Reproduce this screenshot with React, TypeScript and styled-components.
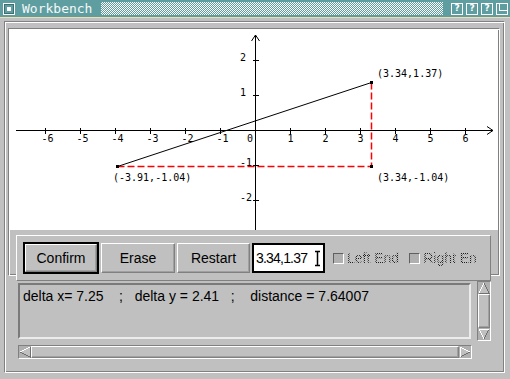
import React from 'react'
import styled, { createGlobalStyle } from 'styled-components'

const GlobalStyle = createGlobalStyle`
  *, *::before, *::after { box-sizing: border-box; }
  html, body { margin: 0; padding: 0; background: #c0c0c0; }
  body {
    width: 510px;
    height: 379px;
    overflow: hidden;
    font-family: "Liberation Sans", Arial, sans-serif;
  }
`

const Window = styled.div`
  width: 510px;
  height: 379px;
  background: #c0c0c0;
  display: flex;
  flex-direction: column;
`

const TitleBar = styled.div`
  height: 18px;
  background: #5f9ea0;
  border-bottom: 1px solid #f3dcb0;
  display: flex;
  align-items: center;
  padding: 0 2px 0 3px;
`

const Title = styled.span`
  font-family: "DejaVu Sans Mono", monospace;
  font-size: 13px;
  color: #f4f8f8;
  margin-left: 7px;
  line-height: 17px;
`

const Hatch = styled.div`
  flex: 1;
  height: 13px;
  margin: 0 8px 0 9px;
  background: repeating-conic-gradient(#ffffff 0% 25%, #5f9ea0 0% 50%) 0 0 / 2px 2px;
`

const TitleButtons = styled.div`
  display: flex;
  gap: 3px;
`

const HelpBox = styled.span`
  width: 12px;
  height: 12px;
  border: 1px solid #ffffff;
  display: flex;
  align-items: center;
  justify-content: center;
  font-family: "DejaVu Sans", sans-serif;
  font-weight: bold;
  font-size: 9px;
  line-height: 1;
  color: #ffffff;
`

const Frame = styled.div`
  margin: 3px 5px 0 4px;
  border: 1px solid;
  border-color: #808080 #ffffff #ffffff #808080;
  box-shadow: inset 1px 1px 0 #ffffff, inset -1px -1px 0 #808080;
  padding: 6px 4px 13px 3px;
`

const Well = styled.div`
  width: 492px;
  border: 1px solid;
  border-color: #808080 #ffffff #ffffff #808080;
  box-shadow: inset 1px 1px 0 #ffffff, inset -1px -1px 0 #808080;
  padding: 1px;
`

const Canvas = styled.div`
  width: 488px;
  height: 200px;
  background: #ffffff;
  overflow: hidden;

  svg { display: block; }
  text {
    font-family: "DejaVu Sans Mono", "Liberation Mono", monospace;
    font-size: 10px;
    fill: #000;
  }
`

const ButtonPanel = styled.div`
  height: 46px;
  margin: 5px 7px -7px 6px;
  border: 1px solid;
  border-color: #ffffff #808080 #808080 #ffffff;
  padding: 0 6px;
  display: flex;
  align-items: center;
  gap: 2px;
  background: #c0c0c0;
`

const DefaultRing = styled.div`
  border: 2px solid #000;
  display: flex;
`

const Button = styled.div<{ $w: number; $h: number }>`
  width: ${p => p.$w}px;
  height: ${p => p.$h}px;
  display: flex;
  align-items: center;
  justify-content: center;
  border: 1px solid;
  border-color: #ffffff #808080 #808080 #ffffff;
  box-shadow: inset -1px -1px 0 #a0a0a0;
  font-size: 14px;
  color: #000;
  background: #c0c0c0;
`

const EntryBox = styled.div`
  position: relative;
  width: 73px;
  height: 30px;
  border: 2px solid #000;
  background: #ffffff;
  display: flex;
  align-items: center;
  padding-left: 2px;
  overflow: hidden;
  font-size: 14px;
  letter-spacing: -0.8px;
  color: #000;
  white-space: nowrap;
`

const IBeam = styled.svg`
  position: absolute;
  right: 2px;
  top: 5px;
`

const Check = styled.div<{ $ml: number }>`
  display: flex;
  align-items: center;
  margin-left: ${p => p.$ml}px;
  gap: 3px;
`

const Indicator = styled.span`
  width: 11px;
  height: 11px;
  border: 1px solid;
  border-color: #606060 #ffffff #ffffff #606060;
  background: #b0b0b0;
`

const Stippled = styled.span`
  font-size: 14px;
  color: #1e1e1e;
  white-space: nowrap;
  -webkit-mask-image: repeating-conic-gradient(#000 0% 25%, transparent 0% 50%);
  -webkit-mask-size: 2px 2px;
  mask-image: repeating-conic-gradient(#000 0% 25%, transparent 0% 50%);
  mask-size: 2px 2px;
`

const TextRow = styled.div`
  display: flex;
  align-items: center;
  margin: 5px 0 0 10px;
  gap: 6px;
`

const TextArea = styled.div`
  width: 453px;
  height: 56px;
  border: 2px solid;
  border-color: #7a7a7a #ececec #ececec #7a7a7a;
  padding: 3px 3px;
  font-size: 14px;
  line-height: 16px;
  color: #000;
  white-space: pre;
  overflow: hidden;
`

const Scrollbar = styled.div<{ $vertical?: boolean }>`
  display: flex;
  flex-direction: ${p => (p.$vertical ? 'column' : 'row')};
  width: ${p => (p.$vertical ? '14px' : '454px')};
  height: ${p => (p.$vertical ? '60px' : '14px')};
  border: 1px solid;
  border-color: #808080 #ffffff #ffffff #808080;
  background: #b0b0b0;
`

const HScrollWrap = styled.div`
  margin: 4px 0 0 10px;
`

const Slider = styled.div`
  flex: 1;
  border: 1px solid;
  border-color: #ffffff #808080 #808080 #ffffff;
  box-shadow: inset -1px -1px 0 #a0a0a0;
  background: #c0c0c0;
`

type Dir = 'up' | 'down' | 'left' | 'right'

const ArrowBox = styled.svg`
  display: block;
  flex: none;
`

const Arrow = ({ dir }: { dir: Dir }) => {
  const shapes: Record<Dir, { poly: string; lit: string; dark: string }> = {
    up: { poly: '6,1 11,11 1,11', lit: '1,11 6,1', dark: '6,1 11,11 1,11' },
    down: { poly: '1,1 11,1 6,11', lit: '6,11 1,1 11,1', dark: '11,1 6,11' },
    left: { poly: '1,6 11,1 11,11', lit: '11,1 1,6', dark: '1,6 11,11 11,1' },
    right: { poly: '1,1 11,6 1,11', lit: '1,11 1,1 11,6', dark: '11,6 1,11' },
  }
  const s = shapes[dir]
  return (
    <ArrowBox width={12} height={12} viewBox="0 0 12 12" shapeRendering="crispEdges">
      <polygon points={s.poly} fill="#c0c0c0" />
      <polyline points={s.dark} fill="none" stroke="#707070" strokeWidth={1} />
      <polyline points={s.lit} fill="none" stroke="#ffffff" strokeWidth={1} />
    </ArrowBox>
  )
}

const U = 35
const OX = 245.5
const OY = 100.5
const px = (v: number) => Math.round(244 + v * U) + 0.5
const py = (v: number) => Math.round(100 - v * U) + 0.5

const Graph = () => {
  const xt = [-6, -5, -4, -3, -2, -1, 1, 2, 3, 4, 5, 6]
  const yt = [2, 1, -1, -2]
  const a = { x: px(-3.91), y: py(-1.04) }
  const b = { x: px(3.34), y: py(1.37) }
  const c = { x: px(3.34), y: py(-1.04) }
  return (
    <svg width={488} height={200} viewBox="0 0 488 200">
      <g stroke="#000" strokeWidth={1} shapeRendering="crispEdges" fill="none">
        <line x1={6} y1={OY} x2={483} y2={OY} />
        <polyline points={`477,96.5 483,${OY} 477,104.5`} shapeRendering="auto" />
        <line x1={OX} y1={5} x2={OX} y2={200} />
        <polyline points={`241.5,11 ${OX},5 249.5,11`} shapeRendering="auto" />
        {xt.map(k => (
          <line key={k} x1={OX + k * U} y1={OY - 3} x2={OX + k * U} y2={OY + 3} />
        ))}
        {yt.map(k => (
          <line key={k} x1={OX - 3} y1={OY - k * U} x2={OX + 3} y2={OY - k * U} />
        ))}
      </g>
      {xt.map(k => (
        <text key={k} x={OX + k * U + (k < 0 ? 2 : 0)} y={112} textAnchor="middle">
          {k}
        </text>
      ))}
      <text x={243} y={112} textAnchor="end">0</text>
      {yt.map(k => (
        <text key={k} x={230} y={OY - k * U + 0.5}>
          {k}
        </text>
      ))}
      <g stroke="#ff0000" strokeWidth={1.5} strokeDasharray="7 3" fill="none">
        <line x1={a.x} y1={a.y} x2={c.x} y2={c.y} />
        <line x1={b.x} y1={b.y} x2={c.x} y2={c.y} />
      </g>
      <line x1={a.x} y1={a.y} x2={b.x} y2={b.y} stroke="#000" strokeWidth={1} />
      {[a, b, c].map((p, i) => (
        <rect key={i} x={p.x - 1.5} y={p.y - 1.5} width={3} height={3} fill="#000" />
      ))}
      <text x={367} y={47}>(3.34,1.37)</text>
      <text x={367} y={151}>(3.34,-1.04)</text>
      <text x={103} y={151}>(-3.91,-1.04)</text>
    </svg>
  )
}

const App = () => {
  return (
    <Window>
      <GlobalStyle />
      <TitleBar>
        <svg width={12} height={12} viewBox="0 0 12 12" shapeRendering="crispEdges">
          <rect x={0.5} y={0.5} width={11} height={11} fill="none" stroke="#fff" />
          <rect x={1.5} y={1.5} width={9} height={9} fill="none" stroke="#3f6e70" />
          <rect x={4} y={4} width={4} height={4} fill="#fff" />
        </svg>
        <Title>Workbench</Title>
        <Hatch />
        <TitleButtons>
          <HelpBox>?</HelpBox>
          <HelpBox>?</HelpBox>
          <HelpBox>?</HelpBox>
          <svg width={12} height={12} viewBox="0 0 12 12" shapeRendering="crispEdges">
            <rect x={0.5} y={0.5} width={11} height={11} fill="none" stroke="#fff" />
            <polyline points="3.5,0.5 3.5,7.5 11.5,7.5" fill="none" stroke="#fff" />
          </svg>
        </TitleButtons>
      </TitleBar>

      <Frame>
        <Well>
          <Canvas>
            <Graph />
          </Canvas>
          <ButtonPanel>
            <DefaultRing>
              <Button $w={72} $h={28}>Confirm</Button>
            </DefaultRing>
            <Button $w={74} $h={30}>Erase</Button>
            <Button $w={73} $h={30}>Restart</Button>
            <EntryBox>
              3.34,1.37
              <IBeam width={6} height={17} viewBox="0 0 6 17">
                <path d="M0 1.5 H5 M2.5 1.5 V15.5 M0 15.5 H5" stroke="#000" strokeWidth={1.5} fill="none" />
              </IBeam>
            </EntryBox>
            <Check $ml={6}>
              <Indicator />
              <Stippled>Left End</Stippled>
            </Check>
            <Check $ml={8}>
              <Indicator />
              <Stippled>Right En</Stippled>
            </Check>
          </ButtonPanel>
        </Well>

        <TextRow>
          <TextArea>{'delta x= 7.25    ;   delta y = 2.41   ;    distance = 7.64007'}</TextArea>
          <Scrollbar $vertical>
            <Arrow dir="up" />
            <Slider />
            <Arrow dir="down" />
          </Scrollbar>
        </TextRow>

        <HScrollWrap>
          <Scrollbar>
            <Arrow dir="left" />
            <Slider />
            <Arrow dir="right" />
          </Scrollbar>
        </HScrollWrap>
      </Frame>
    </Window>
  )
}

export default App
